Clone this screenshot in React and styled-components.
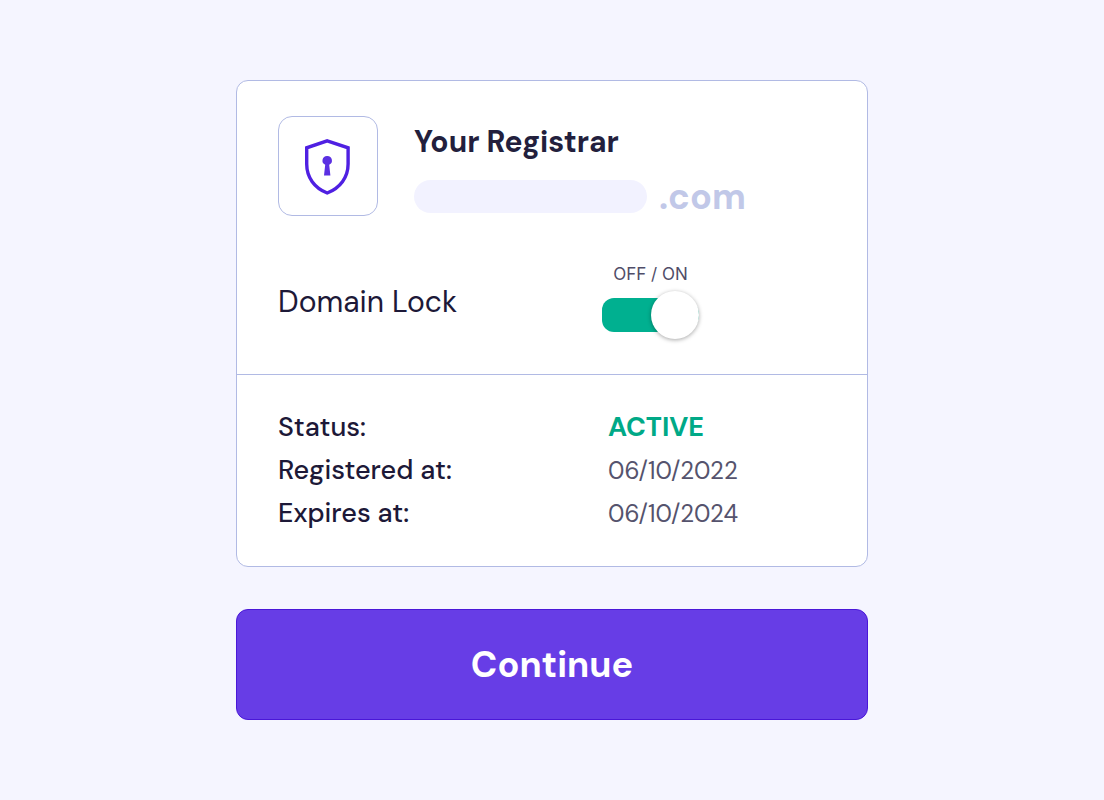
import React, { useState } from 'react';
import styled, { createGlobalStyle } from 'styled-components';

const details = [
	{ label: 'Status:', value: 'ACTIVE', active: true },
	{ label: 'Registered at:', value: '06/10/2022' },
	{ label: 'Expires at:', value: '06/10/2024' }
];

const ShieldIcon = () => (
	<svg width="46" height="57" viewBox="0 0 46 57" fill="none" aria-hidden="true">
		<path
			d="M22.2 2.8 L43.1 9.8 V26 C43.1 39.5 35 50 22.2 55 C9.5 50 1.7 39.5 1.7 26 V9.8 Z"
			stroke="#4f20e2"
			strokeWidth="3.4"
		/>
		<path d="M22.2 18 A4.6 4.6 0 0 1 24.2 26.8 L25.4 37.4 H19 L20.2 26.8 A4.6 4.6 0 0 1 22.2 18 Z" fill="#5b30e2" />
	</svg>
);

const App = () => {
	const [ locked, setLocked ] = useState(true);

	return (
		<StyledPage>
			<GlobalStyle />
			<StyledCard>
				<StyledTop>
					<StyledRegistrar>
						<StyledIconBox>
							<ShieldIcon />
						</StyledIconBox>
						<div>
							<StyledTitle>Your Registrar</StyledTitle>
							<StyledDomain>
								<StyledPill />
								<StyledTld>.com</StyledTld>
							</StyledDomain>
						</div>
					</StyledRegistrar>
					<StyledLock>
						<StyledLockLabel htmlFor="domain-lock">Domain Lock</StyledLockLabel>
						<StyledSwitchCont>
							<span>OFF / ON</span>
							<StyledSwitch
								id="domain-lock"
								type="checkbox"
								checked={locked}
								onChange={() => setLocked(!locked)}
							/>
						</StyledSwitchCont>
					</StyledLock>
				</StyledTop>
				<StyledBottom>
					<StyledTable>
						<tbody>
							{details.map(({ label, value, active }) => (
								<tr key={label}>
									<StyledTh scope="row">{label}</StyledTh>
									<StyledTd $active={active}>{value}</StyledTd>
								</tr>
							))}
						</tbody>
					</StyledTable>
				</StyledBottom>
			</StyledCard>
			<StyledBtn type="button">Continue</StyledBtn>
		</StyledPage>
	);
};

export default App;

const GlobalStyle = createGlobalStyle`
	* {
		box-sizing: border-box;
	}

	body {
		margin: 0;
		background-color: #f5f5ff;
		color: #1d1938;
		font-family: 'DM Sans', Inter, sans-serif;
	}
`;

const StyledPage = styled.main`
	display: flex;
	flex-direction: column;
	gap: 42px;
	max-width: 632px;
	margin: 0 auto;
	padding: 80px 0;
`;

const StyledCard = styled.section`
	background-color: #ffffff;
	border: 1px solid #b1bae4;
	border-radius: 12px;
`;

const StyledTop = styled.div`
	padding: 35px 41px 34px;
	border-bottom: 1px solid #b1bae4;
`;

const StyledRegistrar = styled.div`
	display: flex;
	gap: 36px;
`;

const StyledIconBox = styled.div`
	display: flex;
	align-items: center;
	justify-content: center;
	flex-shrink: 0;
	width: 100px;
	height: 100px;
	border: 1px solid #b1bae4;
	border-radius: 14px;
`;

const StyledTitle = styled.h1`
	margin: 8px 0 20px;
	font-size: 30px;
	font-weight: 700;
	line-height: 36px;
	color: #231f3d;
`;

const StyledDomain = styled.div`
	display: flex;
	align-items: center;
	gap: 12px;
	height: 33px;
`;

const StyledPill = styled.div`
	width: 233px;
	height: 33px;
	border-radius: 17px;
	background-color: #f2f2ff;
`;

const StyledTld = styled.span`
	font-size: 36px;
	font-weight: 700;
	line-height: 36px;
	color: #c1c8e8;
`;

const StyledLock = styled.div`
	display: grid;
	grid-template-columns: 324px 1fr;
	align-items: center;
	margin-top: 47px;
`;

const StyledLockLabel = styled.label`
	font-size: 30px;
	line-height: 36px;
`;

const StyledSwitchCont = styled.div`
	display: flex;
	flex-direction: column;
	align-items: center;
	gap: 13px;
	width: 97px;
	padding-bottom: 8px;

	span {
		font-family: Inter, sans-serif;
		font-size: 17px;
		line-height: 22px;
		color: #4f4d68;
	}
`;

const StyledSwitch = styled.input`
	appearance: none;
	display: flex;
	align-items: center;
	justify-content: ${({ checked }) => (checked ? 'flex-end' : 'flex-start')};
	width: 97px;
	height: 34px;
	margin: 0;
	border-radius: ${({ checked }) => (checked ? '12px 17px 17px 12px' : '17px 12px 12px 17px')};
	background-color: ${({ checked }) => (checked ? '#00b090' : '#c1c8e8')};
	cursor: pointer;

	&::before {
		content: '';
		flex-shrink: 0;
		width: 48px;
		height: 48px;
		border-radius: 50%;
		background-color: #ffffff;
		box-shadow: 0 1px 4px rgba(0, 0, 0, 0.35);
	}
`;

const StyledBottom = styled.div`
	padding: 36px 41px 26px;
`;

const StyledTable = styled.table`
	width: 100%;
	table-layout: fixed;
	border-collapse: collapse;
`;

const StyledTh = styled.th`
	width: 330px;
	height: 43px;
	padding: 0;
	font-size: 27px;
	font-weight: 500;
	line-height: 32px;
	text-align: left;
	vertical-align: baseline;
`;

const StyledTd = styled.td`
	padding: 0;
	font-size: ${({ $active }) => ($active ? 27 : 24)}px;
	font-weight: ${({ $active }) => ($active ? 700 : 400)};
	line-height: 32px;
	vertical-align: baseline;
	color: ${({ $active }) => ($active ? '#00a987' : '#55536d')};
`;

const StyledBtn = styled.button`
	height: 111px;
	border: 1px solid #4a17d8;
	border-radius: 12px;
	background-color: #673de6;
	color: #ffffff;
	font-family: inherit;
	font-size: 36px;
	font-weight: 700;
	cursor: pointer;
`;
